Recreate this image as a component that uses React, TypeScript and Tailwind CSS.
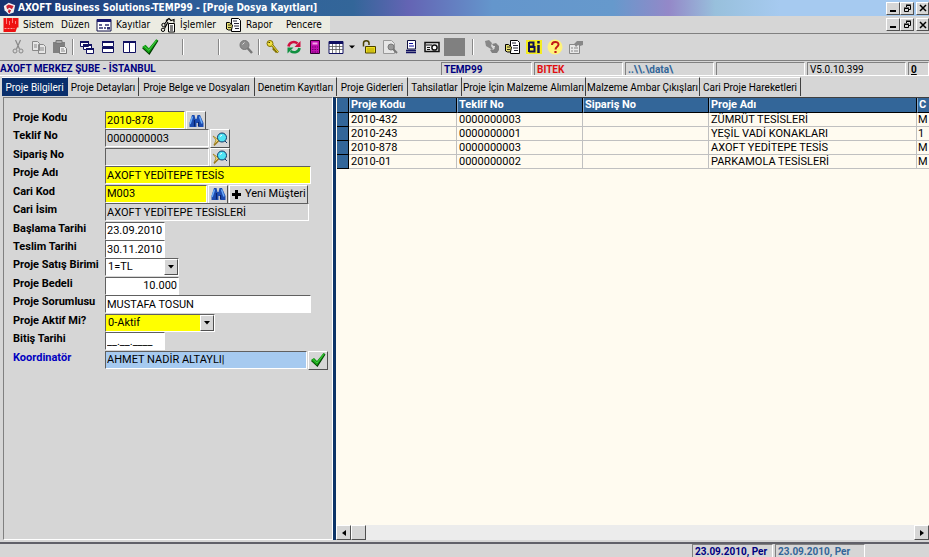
import React from "react";
import clsx from "clsx";

const MENUS = [
  { label: "Sistem", icon: "axoft", className: "w-[58px]" },
  { label: "Düzen", icon: "", className: "w-[35px]" },
  { label: "Kayıtlar", icon: "form", className: "w-[64px]" },
  { label: "İşlemler", icon: "tools", className: "w-[66px]" },
  { label: "Rapor", icon: "report", className: "w-[60px]" },
  { label: "Pencere", icon: "", className: "w-[44px]" },
];

const TABS = [
  { label: "Proje Bilgileri", className: "w-[66px]" },
  { label: "Proje Detayları", className: "w-[71px]" },
  { label: "Proje Belge ve Dosyaları", className: "w-[116px]" },
  { label: "Denetim Kayıtları", className: "w-[82px]" },
  { label: "Proje Giderleri", className: "w-[71px]" },
  { label: "Tahsilatlar", className: "w-[54px]" },
  { label: "Proje İçin Malzeme Alımları", className: "w-[124px]" },
  { label: "Malzeme Ambar Çıkışları", className: "w-[114px]" },
  { label: "Cari Proje Hareketleri", className: "w-[101px]" },
];

const COLUMNS = ["Proje Kodu", "Teklif No", "Sipariş No", "Proje Adı", "C"];

const ROWS = [
  ["2010-432", "0000000003", "", "ZÜMRÜT TESİSLERİ", "M"],
  ["2010-243", "0000000001", "", "YEŞİL VADİ KONAKLARI", "1"],
  ["2010-878", "0000000003", "", "AXOFT YEDİTEPE TESİS", "M"],
  ["2010-01", "0000000002", "", "PARKAMOLA TESİSLERİ", "M"],
];

const sunken =
  "border border-t-[#606060] border-l-[#606060] border-r-white border-b-white";
const raised =
  "border border-t-white border-l-white border-r-[#505050] border-b-[#505050] bg-[#d6d6d6]";

const Svg = ({
  children,
  className = "h-4 w-4",
  box = "0 0 16 16",
}: {
  children: React.ReactNode;
  className?: string;
  box?: string;
}) => (
  <svg viewBox={box} className={clsx("shrink-0", className)} fill="none" aria-hidden="true">
    {children}
  </svg>
);

const Check = ({ className }: { className?: string }) => (
  <Svg className={className}>
    <path d="M1 9l3-2.5 3 3L14 1.5l1.5 1L7.5 15z" fill="#003c00" />
    <path d="M1 8l3-2 3 3L13.5 1l1.5 1L7 13.5z" fill="#12a012" />
    <path d="M3 7.5l4 3.5L13.5 2.5" stroke="#4fd04f" strokeWidth="0.8" />
  </Svg>
);

const Binoculars = () => (
  <Svg>
    <path d="M4 2h2.500l1 4h1l1-4H12l3.500 8v4h-5v-4h-2v4h-7v-4z" fill="#1c4cb0" />
    <path d="M4.500 3.500L2 11M11.500 3.500l2.500 7" stroke="#6aaaf8" strokeWidth="1.500" />
    <path d="M6.500 7v6.500M10.500 9v4.500" stroke="#0a246a" strokeWidth="1.200" />
  </Svg>
);

const Lens = () => (
  <Svg>
    <path d="M1 5l6 4-5 5 2-5z" fill="#f4e080" stroke="#a08020" strokeWidth="0.8" />
    <path d="M2 14.500l5-5" stroke="#9a7a20" strokeWidth="1.300" />
    <circle cx="10" cy="6.500" r="4.500" fill="#50e4f4" stroke="#103868" />
    <path d="M8 5.500l2-1.500" stroke="#fff" />
    <path d="M13 10l2 2" stroke="#103868" />
  </Svg>
);

const ReportIcon = ({ className }: { className?: string }) => (
  <Svg className={className}>
    <path d="M5.500 1.500h7l2 2v11h-9z" fill="#fff" stroke="#000" />
    <path d="M7 4h4M8 6.500h5M8 9h5M9 11.500h4" stroke="#223" />
    <path d="M0.500 5.500h3l3 2.500-1 5h-3l-2-1z" fill="#e8e070" stroke="#000" />
    <path d="M2 8h3M2 10.500h3" stroke="#000" strokeWidth="0.8" />
  </Svg>
);

const MENU_ICONS: Record<string, React.ReactNode> = {
  axoft: (
    <Svg>
      <path d="M0.500 1h15v9.500H14L12.500 15H0.500z" fill="#ee1111" />
      <path d="M3.500 1v6M6.500 4v4M9.500 1v5M12.500 4v3" stroke="#ff9c9c" strokeWidth="0.8" />
      <path d="M1.500 11.500h10" stroke="#ffc0c0" strokeWidth="0.800" strokeDasharray="2 1" />
    </Svg>
  ),
  form: (
    <Svg>
      <path d="M1 2.500h14v11.500H1z" fill="#fff" stroke="#101048" />
      <path d="M1 3.500h14" stroke="#181870" strokeWidth="3" />
      <path d="M3 8h3M3 11h4M8 11h2M9 8h4" stroke="#303070" strokeWidth="1.300" />
      <path d="M11 10h3v2.500h-3z" fill="#303070" />
    </Svg>
  ),
  tools: (
    <Svg>
      <path d="M8.500 6.500h6v8.500h-6z" fill="#fff" stroke="#000" />
      <path d="M10 9h3M10 11h3M10 13h3" stroke="#000" />
      <circle cx="3.500" cy="8" r="1.700" stroke="#000" />
      <circle cx="3" cy="12.800" r="1.700" stroke="#000" />
      <path d="M4.500 7L8 2.500M4.500 11.500L8 5M6 3.500l3-2 2 2 3-1v3" stroke="#000" strokeWidth="1.200" />
    </Svg>
  ),
  report: <ReportIcon />,
};

type Tool = { name: string; icon?: React.ReactNode; className?: string };

const TOOLS: Tool[] = [
  {
    name: "Kes",
    icon: (
      <Svg>
        <path d="M5.500 1l4 9M10.500 1l-4 9" stroke="#888" strokeWidth="1.200" />
        <circle cx="5" cy="12" r="2" stroke="#888" />
        <circle cx="11" cy="12" r="2" stroke="#888" />
      </Svg>
    ),
  },
  {
    name: "Kopyala",
    icon: (
      <Svg>
        <path d="M1.500 2.500h5l2 2v7h-7zM7.500 5.500h5l2 2v7h-7z" fill="#e6e6e6" stroke="#888" />
        <path d="M3 6h3M3 8h3M9 9h4M9 11h4" stroke="#888" />
      </Svg>
    ),
  },
  {
    name: "Yapıştır",
    icon: (
      <Svg>
        <path d="M1 3h12v11H1z" fill="#808080" />
        <path d="M4 1.500h6v3H4z" fill="#aaa" stroke="#777" />
        <path d="M7.500 7.500h5l2 2v5h-7z" fill="#eee" stroke="#777" />
        <path d="M9 10h3M9 12h4" stroke="#888" />
      </Svg>
    ),
  },
  { name: "|", className: "w-[6px]" },
  {
    name: "Basamakla",
    icon: (
      <Svg>
        <path d="M1.500 2.500h8v5h-8zM4.500 5.500h8v5h-8zM7.500 9.500h7v5h-7z" fill="#fff" stroke="#101060" />
        <path d="M1 3h9M4 6h9M7 10h8" stroke="#101060" strokeWidth="2" />
      </Svg>
    ),
  },
  {
    name: "Yatay Döşe",
    icon: (
      <Svg>
        <path d="M2.500 2.500h11v5h-11zM2.500 8.500h11v5h-11z" fill="#fff" stroke="#101060" />
        <path d="M2 3h12M2 9h12" stroke="#101060" strokeWidth="2" />
      </Svg>
    ),
  },
  {
    name: "Dikey Döşe",
    icon: (
      <Svg>
        <path d="M2.500 2.500h6v11h-6zM8.500 2.500h6v11h-6z" fill="#fff" stroke="#101060" />
        <path d="M2 3h13" stroke="#101060" strokeWidth="2" />
      </Svg>
    ),
  },
  { name: "Onayla", icon: <Check className="h-[18px] w-[18px]" /> },
  { name: "|", className: "w-[46px]" },
  { name: "|", className: "w-[25px]" },
  {
    name: "Bul",
    className: "ml-[4px]",
    icon: (
      <Svg>
        <circle cx="6.500" cy="6" r="4.500" fill="#8c8c8c" stroke="#777" />
        <path d="M4.500 5.500l2-2" stroke="#ddd" />
        <path d="M9.500 9l4.500 5" stroke="#777" strokeWidth="2.500" />
      </Svg>
    ),
  },
  { name: "|", className: "w-[6px]" },
  {
    name: "Anahtar",
    icon: (
      <Svg>
        <path d="M7 6l6 7.500M10 9l-2 2M12 11l-2 2" stroke="#807000" strokeWidth="2.500" />
        <circle cx="5" cy="4.500" r="3" fill="#f0e040" stroke="#807000" />
        <path d="M3.500 3.500h1.500" stroke="#403800" />
        <path d="M7 6l6 7" stroke="#f0e040" />
      </Svg>
    ),
  },
  {
    name: "Yenile",
    icon: (
      <Svg>
        <path d="M2.500 7.500C3 3.500 8 1.500 11.500 4.500" stroke="#d01040" strokeWidth="2.600" />
        <path d="M14.500 2v6h-6z" fill="#d01040" />
        <path d="M13.500 9C13 13 8 14.500 4.500 12" stroke="#109040" strokeWidth="2.600" />
        <path d="M1.500 14.500v-6h6z" fill="#109040" />
      </Svg>
    ),
  },
  {
    name: "Defter",
    icon: (
      <Svg>
        <path d="M3.500 1.500h9v13h-9z" fill="#c010b0" stroke="#300030" />
        <path d="M5.500 4.500h5" stroke="#f0a0e8" strokeWidth="2" />
        <path d="M5 8h6M5 10.500h6M5 13h6" stroke="#700070" strokeDasharray="1.500 1" />
      </Svg>
    ),
  },
  {
    name: "Takvim",
    icon: (
      <Svg>
        <path d="M1 2.500h14v12H1z" fill="#fff" stroke="#101060" />
        <path d="M1 3.500h14" stroke="#101060" strokeWidth="3" />
        <path d="M1 7.500h14M1 10.500h14M4.500 5v9M8 5v9M11.500 5v9" stroke="#555" strokeWidth="0.8" />
      </Svg>
    ),
  },
  {
    name: "Takvim seçenekleri",
    className: "w-[12px]",
    icon: (
      <Svg className="h-2 w-2" box="0 0 8 8">
        <path d="M1 2.500h6l-3 3z" fill="#000" />
      </Svg>
    ),
  },
  {
    name: "Kilit",
    icon: (
      <Svg>
        <path d="M2.500 7.500V4c0-3 5.500-3 5.500 0v2" stroke="#4a4000" strokeWidth="1.500" />
        <path d="M4.500 7.500h10v6.500h-10z" fill="#f0e020" stroke="#4a4000" />
        <path d="M6 10h7M6 12h7" stroke="#a09000" strokeWidth="0.8" />
      </Svg>
    ),
  },
  {
    name: "Önizleme",
    icon: (
      <Svg>
        <path d="M1.500 1.500h8l3 3v10h-11z" fill="#e6e6e6" stroke="#999" />
        <circle cx="9" cy="8" r="3" fill="#999" stroke="#777" />
        <path d="M11 10l4 4" stroke="#777" strokeWidth="2" />
      </Svg>
    ),
  },
  {
    name: "Belge",
    icon: (
      <Svg>
        <path d="M4.500 1.500h8v8.500h-8z" fill="#fff" stroke="#101040" />
        <path d="M6 4.500h4M6 7h5" stroke="#1010a0" />
        <path d="M3 11.500h10M3 13.500h10" stroke="#101060" strokeWidth="1.300" />
      </Svg>
    ),
  },
  {
    name: "Kasa",
    icon: (
      <Svg>
        <path d="M1 3.500h14v9H1z" fill="#eee" stroke="#111" strokeWidth="1.500" />
        <circle cx="10.500" cy="8.500" r="2.600" fill="#fff" stroke="#111" strokeWidth="1.500" />
        <path d="M2 6h6M3 8.500h3M3 10.500h3" stroke="#111" />
      </Svg>
    ),
  },
  { name: "Boş", className: "ml-[2px] h-[18px] bg-[#808080]" },
  { name: "|", className: "w-[16px]" },
  {
    name: "Kullanıcılar",
    icon: (
      <Svg>
        <path d="M1 2l4-1 3 3-1 3 2 3h-2L2 7z" fill="#888" />
        <path d="M8 5l4-1 3 3v4l-2 3H8l-2-3 2-1 1 1 2-2z" fill="#808080" />
        <path d="M9 7.500h2" stroke="#ddd" />
      </Svg>
    ),
  },
  { name: "Rapor Al", icon: <ReportIcon /> },
  {
    name: "Bilgi",
    icon: (
      <Svg>
        <path d="M0 1h16v14H0z" fill="#f4ec20" />
        <path d="M3 3v10M3 3.500h4.500v4H3M3 8h5.500v4.500H3" stroke="#101050" strokeWidth="2" />
        <path d="M12.500 6v8M12.500 2v2.500" stroke="#101050" strokeWidth="2.500" />
      </Svg>
    ),
  },
  {
    name: "Yardım",
    icon: (
      <Svg>
        <circle cx="8" cy="8" r="7.500" fill="#fff27a" />
        <path d="M5 6c0-4 6.500-4 6.500-0.500C11.500 8 8.500 7.500 8.500 10.500" stroke="#c01818" strokeWidth="2" />
        <path d="M7.400 12h2.200v2H7.400z" fill="#c01818" />
      </Svg>
    ),
  },
  {
    name: "Özellikler",
    icon: (
      <Svg>
        <path d="M1.500 5.500h10v9h-10z" fill="#e8e8e8" stroke="#888" />
        <path d="M3 9h2M6 9h4M3 12h2M6 12h4" stroke="#888" />
        <path d="M6 5l3-3h6v4l-3 1-2-1-2 2z" fill="#888" />
      </Svg>
    ),
  },
];

const WindowButtons = () => (
  <div className="flex shrink-0">
    <button aria-label="Simge durumuna küçült" className={clsx(raised, "flex h-[13px] w-[14px] items-end justify-center pb-[2px]")}>
      <span className="h-[2px] w-[6px] bg-black" />
    </button>
    <button aria-label="Geri yükle" className={clsx(raised, "flex h-[13px] w-[14px] items-center justify-center")}>
      <Svg className="h-[9px] w-[9px]" box="0 0 9 9">
        <path d="M3.500 3V1.500h4v4H6M1.500 4.500h4v3h-4zM3 1h5M1 4h5" stroke="#000" />
      </Svg>
    </button>
    <button aria-label="Kapat" className={clsx(raised, "ml-[2px] flex h-[13px] w-[13px] items-center justify-center")}>
      <Svg className="h-2 w-2" box="0 0 8 8">
        <path d="M1 1l6 6M7 1L1 7" stroke="#000" strokeWidth="1.500" />
      </Svg>
    </button>
  </div>
);

const Row = ({
  id,
  label,
  children,
  active,
}: {
  id: string;
  label: string;
  children: React.ReactNode;
  active?: boolean;
}) => (
  <div className="flex items-start">
    <label
      htmlFor={id}
      className={clsx(
        "w-[92px] shrink-0 whitespace-nowrap text-[11px] leading-[14px] font-bold",
        active && "text-[#0000c0]",
      )}
    >
      {label}
    </label>
    {children}
  </div>
);

const Field = ({
  id,
  value,
  className,
}: {
  id: string;
  value: string;
  className: string;
}) => (
  <input
    id={id}
    defaultValue={value}
    className={clsx(sunken, "h-[18px] shrink-0 rounded-none px-[1px] text-[11px] outline-none", className)}
  />
);

const Combo = ({ id, value, className }: { id: string; value: string; className: string }) => (
  <div className={clsx(sunken, "relative h-[18px] shrink-0", className)}>
    <select id={id} className="block h-4 w-full appearance-none pl-[2px] text-[11px] leading-4 outline-none">
      <option>{value}</option>
    </select>
    <span className={clsx(raised, "pointer-events-none absolute inset-y-0 right-0 flex w-[14px] items-center justify-center")}>
      <Svg className="h-2 w-2" box="0 0 8 8">
        <path d="M1 2h6L4 5.500z" fill="#000" />
      </Svg>
    </span>
  </div>
);

const IconButton = ({ label, children }: { label: string; children: React.ReactNode }) => (
  <button type="button" aria-label={label} className={clsx(raised, "ml-[1px] flex h-[19px] w-5 shrink-0 items-center justify-center")}>
    {children}
  </button>
);

const ProjectForm = () => (
  <form className="w-[330px] shrink-0 border border-t-[#808080] border-r-white border-b-white border-l-[#808080] py-[13px] pl-[9px]">
    <div className="grid h-[258px] auto-rows-fr">
      <Row id="kod" label="Proje Kodu">
        <Field id="kod" value="2010-878" className="w-[80px] bg-[#ffff00]" />
        <IconButton label="Proje ara"><Binoculars /></IconButton>
      </Row>
      <Row id="teklif" label="Teklif No">
        <Field id="teklif" value="0000000003" className="w-[104px]" />
        <IconButton label="Teklif ara"><Lens /></IconButton>
      </Row>
      <Row id="siparis" label="Sipariş No">
        <Field id="siparis" value="" className="w-[104px]" />
        <IconButton label="Sipariş ara"><Lens /></IconButton>
      </Row>
      <Row id="ad" label="Proje Adı">
        <Field id="ad" value="AXOFT YEDİTEPE TESİS" className="w-[206px] bg-[#ffff00]" />
      </Row>
      <Row id="cari" label="Cari Kod">
        <Field id="cari" value="M003" className="w-[102px] bg-[#ffff00]" />
        <IconButton label="Cari ara"><Binoculars /></IconButton>
        <button type="button" className={clsx(raised, "ml-[1px] flex h-[19px] w-[79px] items-center gap-1 pl-[2px] text-[11px] leading-4 whitespace-nowrap")}>
          <Svg className="h-[9px] w-[9px]" box="0 0 9 9">
            <path d="M3 0h3v3h3v3H6v3H3V6H0V3h3z" fill="#000" />
          </Svg>
          Yeni Müşteri
        </button>
      </Row>
      <Row id="isim" label="Cari İsim">
        <Field id="isim" value="AXOFT YEDİTEPE TESİSLERİ" className="w-[204px]" />
      </Row>
      <Row id="baslama" label="Başlama Tarihi">
        <Field id="baslama" value="23.09.2010" className="w-[60px] bg-white" />
      </Row>
      <Row id="teslim" label="Teslim Tarihi">
        <Field id="teslim" value="30.11.2010" className="w-[60px] bg-white" />
      </Row>
      <Row id="birim" label="Proje Satış Birimi">
        <Combo id="birim" value="1=TL" className="w-[74px] bg-white" />
      </Row>
      <Row id="bedel" label="Proje Bedeli">
        <Field id="bedel" value="10.000" className="w-[74px] bg-white text-right" />
      </Row>
      <Row id="sorumlu" label="Proje Sorumlusu">
        <Field id="sorumlu" value="MUSTAFA TOSUN" className="w-[206px] bg-white" />
      </Row>
      <Row id="aktif" label="Proje Aktif Mi?">
        <Combo id="aktif" value="0-Aktif" className="w-[110px] bg-[#ffff00]" />
      </Row>
      <Row id="bitis" label="Bitiş Tarihi">
        <Field id="bitis" value="__.__.____" className="w-[60px] bg-white" />
      </Row>
      <Row id="koord" label="Koordinatör" active>
        <Field id="koord" value="AHMET NADİR ALTAYLI|" className="w-[202px] bg-[#a6caf0]" />
        <IconButton label="Onayla"><Check className="h-4 w-4" /></IconButton>
      </Row>
    </div>
  </form>
);

const ProjectGrid = () => (
  <section className="flex min-w-0 flex-1 flex-col border-t border-l-[3px] border-t-[#404040] border-l-[#0c3468] bg-[#fffbf0]">
    <div className="flex-1 overflow-hidden pl-[1px]">
      <table className="w-full table-fixed border-separate border-spacing-0 text-[11px] leading-[12px]">
        <colgroup>
          <col className="w-[12px]" />
          <col className="w-[108px]" />
          <col className="w-[126px]" />
          <col className="w-[126px]" />
          <col className="w-[208px]" />
          <col />
        </colgroup>
        <thead>
          <tr className="h-[15px] bg-[#336699] text-left text-white">
            <td className="border-r border-b border-black p-0" />
            {COLUMNS.map((c) => (
              <th key={c} className="border-r border-b border-l border-black border-l-[#88aacc] p-0 pl-[1px] whitespace-nowrap last:border-r-0">
                {c}
              </th>
            ))}
          </tr>
        </thead>
        <tbody>
          {ROWS.map((r) => (
            <tr key={r[0]} className="h-[14px]">
              <td className="border-r border-b border-black bg-[#336699] p-0" />
              {r.map((cell, i) => (
                <td key={i} className="border-r border-b border-[#c0c0c0] p-0 pl-[2px] whitespace-nowrap last:border-r-0 last:pl-[1px]">
                  {cell}
                </td>
              ))}
            </tr>
          ))}
        </tbody>
      </table>
    </div>
    <div className="flex h-[15px] items-stretch justify-between bg-[#ececec]">
      <div className="flex">
        <button aria-label="Sola kaydır" className={clsx(raised, "flex w-[15px] items-center justify-center")}>
          <Svg className="h-2 w-2" box="0 0 8 8">
            <path d="M6 1v6L2 4z" fill="#000" />
          </Svg>
        </button>
        <div className={clsx(raised, "w-[15px]")} />
      </div>
      <button aria-label="Sağa kaydır" className={clsx(raised, "flex w-[15px] items-center justify-center")}>
        <Svg className="h-2 w-2" box="0 0 8 8">
          <path d="M2 1v6l4-3z" fill="#000" />
        </Svg>
      </button>
    </div>
  </section>
);

const Cell = ({ className, children }: { className: string; children?: React.ReactNode }) => (
  <div className={clsx("shrink-0 border border-t-[#808080] border-r-white border-b-0 border-l-[#808080] pl-[2px] whitespace-nowrap", className)}>
    {children}
  </div>
);

export default function App() {
  return (
    <div className="flex min-h-screen flex-col overflow-hidden bg-[#d6d6d6] font-['Roboto','Liberation_Sans',sans-serif] text-black">
      <header className="flex h-4 items-center bg-[linear-gradient(90deg,#15316f_0%,#2f5f9a_22%,#336699_38%,#6464b4_44%,#6496cc_53%,#6699cc_66%,#9488c8_72%,#98c0dc_77%,#a6caf0_84%)] pl-[3px]">
        <Svg className="mr-[2px] h-[13px] w-[13px]">
          <path d="M1 5l6-4 8 3-2 9-6 2-5-5z" fill="#f4f0f0" />
          <path d="M7 3l6 2-2 4-3-2-3 2-1-4zM7 9l3 1-2 4-2-2z" fill="#c82030" />
        </Svg>
        <h1 className="flex-1 font-['DejaVu_Sans_Condensed',sans-serif] text-[10px] leading-4 font-bold whitespace-nowrap text-white">
          AXOFT Business Solutions-TEMP99 - [Proje Dosya Kayıtları]
        </h1>
        <WindowButtons />
      </header>

      <nav className="flex h-[18px] items-center justify-between border-b border-[#808080] font-['DejaVu_Sans_Condensed',sans-serif] text-[10px]">
        <div className="flex h-full items-center bg-[#ecece2] pl-[3px]">
          {MENUS.map((m) => (
            <button key={m.label} className={clsx("flex items-center gap-1 whitespace-nowrap", m.className)}>
              {MENU_ICONS[m.icon]}
              {m.label}
            </button>
          ))}
        </div>
        <WindowButtons />
      </nav>

      <div className="flex h-[27px] items-center border-b border-[#808080] pl-[7px]">
        {TOOLS.map((t, i) =>
          t.name === "|" ? (
            <div key={i} className={clsx("flex h-4 shrink-0 justify-center", t.className)}>
              <span className="border-r border-l border-r-white border-l-[#888888]" />
            </div>
          ) : (
            <button
              key={i}
              aria-label={t.name}
              className={clsx("flex shrink-0 items-center justify-center", t.className?.includes("w-[") ? "" : "w-[21px]", t.className)}
            >
              {t.icon}
            </button>
          ),
        )}
      </div>

      <div className="flex h-[15px] gap-[2px] border-b border-white pt-[1px] text-[10px] leading-[14px] font-bold text-[#000080]">
        <div className="flex-1 whitespace-nowrap">AXOFT MERKEZ ŞUBE - İSTANBUL</div>
        <Cell className="w-[91px]">TEMP99</Cell>
        <Cell className="w-[89px] text-[#e01010]">BITEK</Cell>
        <Cell className="w-[89px] text-[#336699]">..\\.\data\</Cell>
        <Cell className="w-[89px]" />
        <Cell className="w-[99px] font-normal text-black">V5.0.10.399</Cell>
        <Cell className="w-[21px] text-black underline">0</Cell>
      </div>

      <div role="tablist" className="flex h-[20px] items-stretch pt-[1px] pl-[2px] text-[10px]">
        {TABS.map((t, i) => (
          <button
            key={t.label}
            role="tab"
            aria-selected={i === 0}
            className={clsx(
              "shrink-0 border-t border-r border-t-white text-center leading-[17px] whitespace-nowrap",
              i === 0 ? "border-r-[#0a2f6c] bg-[#0a2f6c] text-white" : "border-r-[#404040]",
              t.className,
            )}
          >
            {t.label}
          </button>
        ))}
      </div>

      <main className="flex flex-1 pt-[1px] pb-[2px] pl-[3px]">
        <ProjectForm />
        <ProjectGrid />
      </main>

      <footer className="flex h-[15px] justify-end gap-[2px] border-t-2 border-[#606068] text-[10px] leading-[14px] font-bold">
        <Cell className="w-[81px] text-[#000080]">23.09.2010, Per</Cell>
        <Cell className="w-[90px] text-[#336699]">23.09.2010, Per</Cell>
        <div className="w-[62px]" />
      </footer>
    </div>
  );
}
